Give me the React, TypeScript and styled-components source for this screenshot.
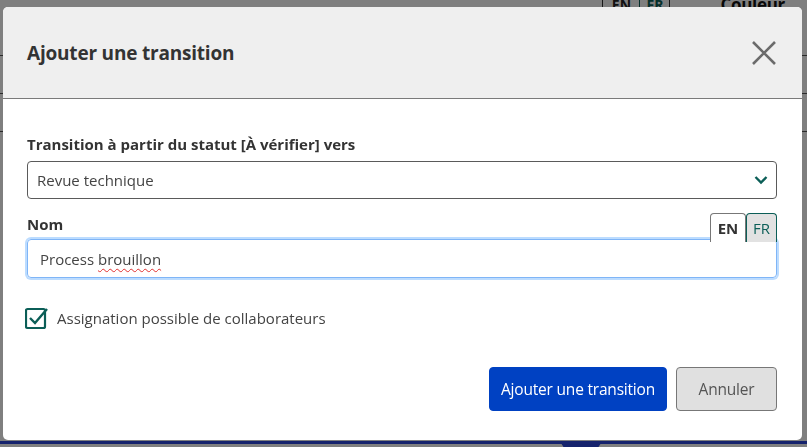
import styled, { createGlobalStyle } from "styled-components";

const GlobalStyle = createGlobalStyle`
  html, body {
    margin: 0;
    padding: 0;
    height: 100%;
    overflow: hidden;
  }
  body {
    font-family: "Open Sans", "Noto Sans", sans-serif;
    background: #ffffff;
  }
`;

const green = "#0b5e57";

// page behind the overlay
const Page = styled.div`
  height: 447px;
  display: flex;
  flex-direction: column;
  overflow: hidden;
`;

const PageHeader = styled.div`
  display: flex;
  justify-content: flex-end;
  align-items: flex-start;
  margin-top: -12px;
  padding-right: 22px;
  gap: 50px;
`;

const LangCells = styled.div`
  display: flex;
  border-left: 1px solid #333;
  border-right: 1px solid #333;
  height: 30px;
`;

const LangCell = styled.div<{ $active?: boolean }>`
  width: ${(p) => (p.$active ? "36px" : "29px")};
  text-align: center;
  padding-top: 7px;
  font-size: 14px;
  font-weight: 700;
  color: ${(p) => (p.$active ? "#222" : green)};
  border-left: ${(p) => (p.$active ? "none" : `1px solid ${green}`)};
`;

const PageTitle = styled.div`
  font-size: 17px;
  font-weight: 700;
  color: #111;
  padding-top: 5px;
  letter-spacing: -0.3px;
`;

const Rows = styled.div`
  flex: 1;
  display: flex;
  flex-direction: column;
`;

const Row = styled.div`
  height: 37px;
  border-bottom: 1px solid #555;
`;

const BottomBar = styled.div`
  height: 3px;
  margin-bottom: 3px;
  background: #2a44d8;
  display: flex;
  justify-content: center;
`;

const Bump = styled.div`
  width: 40px;
  height: 8px;
  margin-left: 354px;
  background: #2a44d8;
  border-radius: 0 0 8px 8px;
  flex-shrink: 0;
`;

// overlay & modal
const Overlay = styled.div`
  position: fixed;
  inset: 0;
  background: rgba(0, 0, 0, 0.5);
  padding: 7px 5px 7px 3px;
  box-sizing: border-box;
`;

const Modal = styled.div`
  width: 799px;
  height: 433px;
  background: #fff;
  border-radius: 5px;
  overflow: hidden;
  display: flex;
  flex-direction: column;
`;

const Header = styled.div`
  height: 92px;
  background: #efefef;
  border-bottom: 1px solid #7a7a7a;
  display: flex;
  align-items: center;
  justify-content: space-between;
  padding: 0 24px 0 24px;
  box-sizing: border-box;
  flex-shrink: 0;
`;

const Title = styled.h2`
  margin: 0;
  font-size: 19px;
  font-weight: 700;
  color: #333;
  letter-spacing: -0.2px;
`;

const CloseButton = styled.button`
  border: none;
  background: none;
  padding: 0;
  width: 28px;
  height: 28px;
  cursor: pointer;
  display: flex;
  align-items: center;
  justify-content: center;
`;

const Body = styled.div`
  padding: 35px 25px 0 24px;
  display: flex;
  flex-direction: column;
  flex: 1;
`;

const Label = styled.label`
  display: block;
  font-size: 15px;
  font-weight: 700;
  color: #333;
  margin-bottom: 7px;
`;

const SelectBox = styled.div`
  height: 38px;
  border: 1px solid #5a5a5a;
  border-radius: 4px;
  display: flex;
  align-items: center;
  justify-content: space-between;
  padding: 0 8px 0 9px;
  box-sizing: border-box;
  font-size: 15px;
  color: #444;
`;

const NameHeader = styled.div`
  display: flex;
  justify-content: space-between;
  align-items: flex-end;
  margin-top: 14px;
`;

const NameLabel = styled(Label)`
  margin-bottom: 5px;
`;

const Tabs = styled.div`
  display: flex;
  margin-bottom: -3px;
  position: relative;
  z-index: 1;
`;

const Tab = styled.div<{ $active?: boolean }>`
  width: ${(p) => (p.$active ? "36px" : "31px")};
  height: 29px;
  box-sizing: border-box;
  display: flex;
  align-items: center;
  justify-content: center;
  font-size: 15px;
  font-weight: ${(p) => (p.$active ? 700 : 400)};
  color: ${(p) => (p.$active ? "#333" : green)};
  background: ${(p) => (p.$active ? "#fff" : "#e2e2e2")};
  border: 1px solid ${(p) => (p.$active ? "#777" : green)};
  border-bottom: none;
  border-radius: 4px 4px 0 0;
`;

const TextInput = styled.div`
  height: 39px;
  border: 1px solid #7fb5f7;
  box-shadow: 0 0 0 2px #bcdcff;
  border-radius: 4px;
  display: flex;
  align-items: center;
  padding-left: 12px;
  box-sizing: border-box;
  font-size: 15px;
  color: #444;
`;

const Misspelled = styled.span`
  text-decoration: underline wavy #e03030;
  text-decoration-thickness: 1px;
  text-underline-offset: 3px;
`;

const CheckRow = styled.label`
  display: flex;
  align-items: center;
  gap: 8px;
  margin-top: 28px;
  margin-left: -2px;
  font-size: 15px;
  color: #444;
`;

const Footer = styled.div`
  display: flex;
  justify-content: flex-end;
  gap: 9px;
  margin-top: auto;
  padding-bottom: 29px;
`;

const Button = styled.button<{ $primary?: boolean }>`
  height: 44px;
  width: ${(p) => (p.$primary ? "178px" : "101px")};
  padding: 0;
  border-radius: 4px;
  font-family: inherit;
  font-size: 15.5px;
  letter-spacing: -0.2px;
  background: ${(p) => (p.$primary ? "#0041c2" : "#e0e0e0")};
  color: ${(p) => (p.$primary ? "#fff" : "#555")};
  border: 1px solid ${(p) => (p.$primary ? "#0041c2" : "#777")};
`;

export default function App() {
  return (
    <>
      <GlobalStyle />
      <Page>
        <PageHeader>
          <LangCells>
            <LangCell $active>EN</LangCell>
            <LangCell>FR</LangCell>
          </LangCells>
          <PageTitle>Couleur</PageTitle>
        </PageHeader>
        <Rows>
          <Row />
          <Row />
          <Row />
        </Rows>
        <BottomBar>
          <Bump />
        </BottomBar>
      </Page>
      <Overlay>
        <Modal>
          <Header>
            <Title>Ajouter une transition</Title>
            <CloseButton aria-label="Fermer">
              <svg width="26" height="26" viewBox="0 0 26 26">
                <path d="M2 2 L24 24 M24 2 L2 24" stroke="#6b6b6b" strokeWidth="2.6" />
              </svg>
            </CloseButton>
          </Header>
          <Body>
            <Label>Transition à partir du statut [À vérifier] vers</Label>
            <SelectBox>
              <span>Revue technique</span>
              <svg width="14" height="10" viewBox="0 0 14 10">
                <path d="M1.5 2 L7 7.5 L12.5 2" fill="none" stroke={green} strokeWidth="2.4" />
              </svg>
            </SelectBox>
            <NameHeader>
              <NameLabel>Nom</NameLabel>
              <Tabs>
                <Tab $active>EN</Tab>
                <Tab>FR</Tab>
              </Tabs>
            </NameHeader>
            <TextInput>
              <span>
                Process <Misspelled>brouillon</Misspelled>
              </span>
            </TextInput>
            <CheckRow>
              <svg width="24" height="24" viewBox="0 0 24 24">
                <rect x="1" y="3" width="19" height="19" rx="1.5" fill="none" stroke={green} strokeWidth="2.2" />
                <path d="M5 12 L10 17 L22 3" fill="none" stroke={green} strokeWidth="2.4" />
              </svg>
              Assignation possible de collaborateurs
            </CheckRow>
            <Footer>
              <Button $primary>Ajouter une transition</Button>
              <Button>Annuler</Button>
            </Footer>
          </Body>
        </Modal>
      </Overlay>
    </>
  );
}
